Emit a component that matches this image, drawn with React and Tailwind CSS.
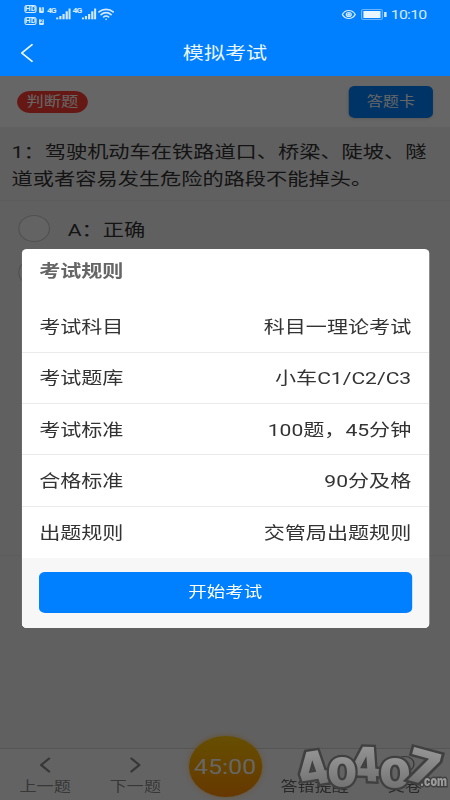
import { ChevronLeft, ChevronRight, Wifi, TriangleAlert, Clock } from 'lucide-react';

const rules = [
  ['考试科目', '科目一理论考试'],
  ['考试题库', '小车C1/C2/C3'],
  ['考试标准', '100题，45分钟'],
  ['合格标准', '90分及格'],
  ['出题规则', '交管局出题规则'],
];

function Signal() {
  return (
    <div className="flex items-end">
      <span className="mb-[5px] w-[7px] text-[7px] leading-[7px] font-bold tracking-[-0.8px]">4G</span>
      <svg width="12" height="12" viewBox="0 0 12 12" fill="currentColor">
        <rect x="0" y="9.5" width="1.8" height="1.8" />
        <rect x="2.6" y="8" width="1.8" height="3.3" />
        <rect x="5.2" y="6" width="1.8" height="5.3" />
        <rect x="7.8" y="3.3" width="1.8" height="8" />
        <rect x="10.2" y="0.5" width="1.8" height="10.8" />
      </svg>
    </div>
  );
}

function HdBadge({ n }) {
  return (
    <div className="flex h-[8px] items-end gap-[2px]">
      <span className="flex h-[8px] w-[10px] items-center justify-center rounded-[2px] border border-current text-[6.5px] leading-[6px] font-bold">HD</span>
      <span className="flex h-[6px] w-[4px] items-center justify-center rounded-[1px] bg-[#d4eaff] text-[5px] leading-[5px] font-bold text-[#007fff]">{n}</span>
    </div>
  );
}

function StatusBar() {
  return (
    <div className="flex h-[29px] items-start justify-between pr-[20px] pl-[20px] text-[#d4eaff]">
      <div className="flex items-start">
        <div className="mt-[4.5px] flex flex-col gap-[4px]">
          <HdBadge n="1" />
          <HdBadge n="2" />
        </div>
        <div className="mt-[8px] ml-[2.5px] flex gap-[2px]">
          <Signal />
          <Signal />
        </div>
        <Wifi className="mt-[6px] ml-[1.5px] h-[16px] w-[14px]" strokeWidth={2.4} preserveAspectRatio="none" />
      </div>
      <div className="flex h-[29px] items-center">
        <svg width="12" height="11" viewBox="0 0 12 11" fill="none" stroke="currentColor" strokeWidth="1.1">
          <path d="M0.7 5.5C3.2 0.2 8.8 0.2 11.3 5.5C8.8 10.8 3.2 10.8 0.7 5.5Z" />
          <circle cx="6" cy="5.5" r="2" />
          <circle cx="6" cy="5.5" r="0.7" fill="currentColor" />
        </svg>
        <div className="ml-[4.5px] flex items-center">
          <div className="h-[11px] w-[18px] rounded-[2px] border border-[#6ab5ff] p-px">
            <div className="h-full w-[14px] bg-[#eaf6ff]" />
          </div>
          <div className="ml-px h-[5px] w-[1.5px] bg-[#d4eaff]" />
        </div>
        <span className="ml-[4px] w-[28.5px] text-[13px] leading-none tracking-[-0.65px] whitespace-nowrap">10:10</span>
      </div>
    </div>
  );
}

function Watermark() {
  return (
    <svg
      className="absolute right-0 bottom-0"
      width="131"
      height="80"
      viewBox="290 720 160 80"
      preserveAspectRatio="none"
      fontFamily="Inter, 'Liberation Sans', sans-serif"
      fontWeight="900"
      strokeLinejoin="miter"
      paintOrder="stroke"
    >
      <defs>
        <linearGradient id="steel" x1="0" y1="0" x2="0" y2="1">
          <stop offset="0.2" stopColor="#939393" />
          <stop offset="0.85" stopColor="#707070" />
        </linearGradient>
      </defs>
      <g fill="url(#steel)" stroke="#404040" strokeWidth="5" fontSize="46" textAnchor="middle">
        <text transform="translate(318 784) rotate(-9) skewX(10)">4</text>
        <text transform="translate(366 781) rotate(2) skewX(6) scale(0.95 1.02)">4</text>
        <text transform="translate(342 787) scale(0.9 0.9)" fontSize="46">0</text>
        <text transform="translate(395 788) scale(0.95 0.9)" fontSize="46">0</text>
        <text transform="translate(419 783) rotate(15) scale(1.15 1)">7</text>
        <text x="433.5" y="786.5" fontSize="13" strokeWidth="3" textLength="27" lengthAdjust="spacingAndGlyphs" fill="#9a9a9a">.com</text>
      </g>
    </svg>
  );
}

export default function App() {
  return (
    <div className="h-[800px] w-[450px] overflow-hidden">
      <div
        className="relative flex h-[800px] w-[369px] origin-top-left scale-x-[1.2195] flex-col bg-[#f1f1f1] font-['Roboto','Noto_Sans_CJK_SC',sans-serif] text-[#333]"
      >
        <header className="h-[76px] shrink-0 bg-[#007fff] text-[#eaf6ff]">
          <StatusBar />
          <div className="flex h-[47px] items-center">
            <svg className="ml-[17px]" width="11" height="20" viewBox="0 0 11 20" fill="none" stroke="currentColor" strokeWidth="1.6">
              <path d="M9.7 1.2L0.9 10L9.7 18.8" />
            </svg>
            <h1 className="mr-[28px] flex-1 text-center text-[17.3px] leading-6">模拟考试</h1>
          </div>
        </header>

        <div className="relative flex flex-1 flex-col">
          <div className="flex h-[51px] shrink-0 items-center justify-between bg-white pr-[14px] pl-[14px]">
            <span className="flex h-[22px] w-[58px] items-center justify-center rounded-full bg-[#ff3d33] pt-px text-[14.2px] text-white">判断题</span>
            <span className="flex h-[32px] w-[69px] items-center justify-center rounded-[5px] bg-[#007fff] text-[13.2px] text-white shadow">答题卡</span>
          </div>
          <p className="h-[74px] shrink-0 border-b border-[#e6e6e6] pt-[12px] pl-[9.5px] text-[17.4px] leading-[26.5px] whitespace-nowrap">
            1：驾驶机动车在铁路道口、桥梁、陡坡、隧
            <br />
            道或者容易发生危险的路段不能掉头。
          </p>
          <div className="flex h-[355px] shrink-0 flex-col gap-[17px] border-b border-[#e6e6e6] pt-[14px] pl-[15px]">
            <div className="flex items-center">
              <span className="h-[27px] w-[26px] rounded-full border border-[#c8c8c8] bg-[#f8f8f8]" />
              <span className="mt-[2px] ml-[14.5px] text-[17.4px] leading-6">A：正确</span>
            </div>
            <span className="h-[27px] w-[26px] rounded-full border border-[#c8c8c8] bg-[#f8f8f8]" />
          </div>
          <div className="flex-1" />
          <nav className="flex h-[52px] shrink-0 border-t border-[#d5d5d5] bg-[#f8f8f8] text-[14px] leading-[18px] text-[#8a8a8a]">
            <div className="flex w-[74px] flex-col items-center pt-[3px]">
              <ChevronLeft className="h-[26px] w-[26px]" strokeWidth={1.8} />
              <span className="-mt-px">上一题</span>
            </div>
            <div className="flex w-[74px] flex-col items-center pt-[3px]">
              <ChevronRight className="h-[26px] w-[26px]" strokeWidth={1.8} />
              <span className="-mt-px">下一题</span>
            </div>
            <div className="flex w-[73px] justify-center">
              <div className="-mt-[13px] flex h-[61px] w-[60px] shrink-0 items-center justify-center rounded-full bg-linear-to-b from-[#ffc400] to-[#ff8c00] text-[20.5px] text-white shadow-[0_0_6px_#ff9c0080]">45:00</div>
            </div>
            <div className="flex w-[74px] flex-col items-center pt-[5px]">
              <TriangleAlert className="mb-[4px] h-[20px] w-[18px]" strokeWidth={1.5} />
              <span className="-mt-px text-[#666]">答错提醒</span>
            </div>
            <div className="flex w-[74px] flex-col items-center pt-[5px]">
              <Clock className="mb-[4px] h-[20px] w-[18px]" strokeWidth={1.5} />
              <span className="-mt-px text-[#666]">交卷</span>
            </div>
          </nav>

          <div className="absolute inset-0 bg-black/60" />

          <section className="absolute top-[173px] left-[17.5px] flex h-[378.5px] w-[334.3px] flex-col overflow-hidden rounded-[4px] bg-white">
            <h2 className="h-[52.5px] pt-[10px] pl-[14.6px] text-[17.3px] leading-6 font-bold text-[#666]">考试规则</h2>
            <dl className="divide-y divide-[#ebebeb]">
              {rules.map(([label, value]) => (
                <div key={label} className="flex h-[51.3px] items-center justify-between px-[14.6px] pt-[3px] text-[17.3px]">
                  <dt>{label}</dt>
                  <dd>{value}</dd>
                </div>
              ))}
            </dl>
            <div className="flex-1 bg-[#f7f7f7] px-[14.3px] pt-[14px]">
              <button className="h-[41px] w-full rounded-[5px] bg-[#007fff] text-[15.2px] text-white">开始考试</button>
            </div>
          </section>

          <Watermark />
        </div>
      </div>
    </div>
  );
}
